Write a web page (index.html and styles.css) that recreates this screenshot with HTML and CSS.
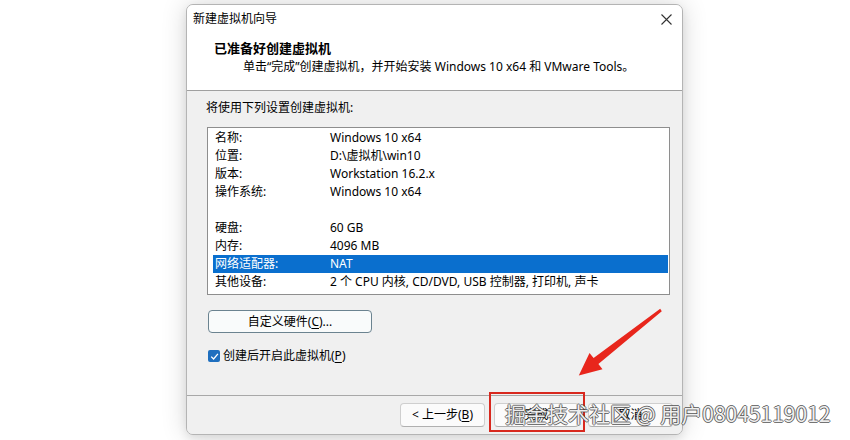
FILE: index.html
```html
<!DOCTYPE html>
<html lang="zh-CN">
<head>
<meta charset="utf-8">
<title>新建虚拟机向导</title>
<link rel="stylesheet" href="styles.css">
</head>
<body>
<div class="stage">
  <div class="dialog">
    <div class="titlebar">
      <span class="title">新建虚拟机向导</span>
      <svg class="close" width="11" height="11" viewBox="0 0 11 11"><path d="M0.5 0.5 L10.5 10.5 M10.5 0.5 L0.5 10.5" stroke="#333" stroke-width="1.1" fill="none"/></svg>
    </div>
    <div class="header">
      <div class="h-title">已准备好创建虚拟机</div>
      <div class="h-sub">单击“完成”创建虚拟机，并开始安装 Windows 10 x64 和 VMware Tools。</div>
    </div>
    <div class="body">
      <div class="intro">将使用下列设置创建虚拟机:</div>
      <div class="listbox">
        <div class="row"><span>名称:</span><span>Windows 10 x64</span></div>
        <div class="row"><span>位置:</span><span>D:\虚拟机\win10</span></div>
        <div class="row"><span>版本:</span><span>Workstation 16.2.x</span></div>
        <div class="row"><span>操作系统:</span><span>Windows 10 x64</span></div>
        <div class="row"></div>
        <div class="row"><span>硬盘:</span><span>60 GB</span></div>
        <div class="row"><span>内存:</span><span>4096 MB</span></div>
        <div class="row selected"><span>网络适配器:</span><span>NAT</span></div>
        <div class="row"><span>其他设备:</span><span>2 个 CPU 内核, CD/DVD, USB 控制器, 打印机, 声卡</span></div>
      </div>
      <button class="btn custom">自定义硬件(<u>C</u>)...</button>
      <label class="check">
        <span class="box"><svg width="9" height="9" viewBox="0 0 9 9"><path d="M1.2 4.6 L3.6 7 L7.9 1.9" stroke="#fff" stroke-width="1.3" fill="none"/></svg></span>
        <span>创建后开启此虚拟机(<u>P</u>)</span>
      </label>
    </div>
    <div class="footer">
      <button class="btn fbtn">&lt; 上一步(<u>B</u>)</button>
      <button class="btn fbtn">完成</button>
      <button class="btn fbtn">取消</button>
    </div>
  </div>
  <svg class="arrow" width="850" height="440" viewBox="0 0 850 440">
    <polygon points="661.8,311.2 598.4,363.9 602.5,369.3 578.8,375.5 589.5,352.9 593.6,358.1 660.2,308.8" fill="#e8261c"/>
  </svg>
  <div class="redbox"></div>
  <div class="watermark">掘金技术社区 @ 用户08045119012</div>
</div>
</body>
</html>
```

FILE: styles.css
```css
html, body {
  margin: 0;
  padding: 0;
}
body {
  width: 850px;
  height: 440px;
  overflow: hidden;
  background: #ffffff;
  font-family: "Noto Sans", "Noto Sans CJK SC", sans-serif;
  font-size: 12px;
  color: #000;
}
.stage {
  position: relative;
  width: 850px;
  height: 440px;
  box-sizing: border-box;
  padding: 4px 0 0 186px;
}
.dialog {
  width: 497px;
  height: 431px;
  box-sizing: border-box;
  border: 1px solid #b4b4b4;
  border-radius: 7px;
  overflow: hidden;
  display: flex;
  flex-direction: column;
  background: #f0f0f0;
  box-shadow: 0 0 26px rgba(0,0,0,0.16), 0 4px 10px rgba(0,0,0,0.08);
}
.titlebar {
  height: 27px;
  flex: none;
  background: #fff;
  display: flex;
  align-items: center;
  justify-content: space-between;
  padding: 0 10px 0 6px;
  line-height: 18px;
}
.title {
  font-size: 12px;
}
.close {
  display: block;
  margin-top: 1px;
}
.header {
  flex: none;
  background: #fff;
  border-bottom: 1px solid #a0a0a0;
  padding: 7px 0 0 27px;
  box-sizing: content-box;
  height: 51px;
}
.h-title {
  font-weight: bold;
  font-size: 13px;
  line-height: 18px;
}
.h-sub {
  line-height: 18px;
  margin-top: 1px;
  padding-left: 29px;
}
.body {
  flex: none;
  height: 304px;
  box-sizing: border-box;
  padding: 8px 0 0 20px;
  background: #f0f0f0;
}
.intro {
  line-height: 18px;
  margin-left: -1px;
}
.listbox {
  margin-top: 10px;
  width: 463px;
  height: 168px;
  box-sizing: border-box;
  border: 1px solid #8e8e8e;
  background: #fff;
  padding: 1px 1px 0 5px;
}
.row {
  height: 18px;
  line-height: 18px;
  display: grid;
  grid-template-columns: 115px 1fr;
  padding-left: 2px;
  white-space: nowrap;
}
.row.selected {
  background: #0a6fce;
  color: #fff;
}
.btn {
  font-family: "Noto Sans", "Noto Sans CJK SC", sans-serif;
  font-size: 12px;
  color: #000;
  background: #fbfbfb;
  border: 1px solid #cfcfcf;
  border-bottom-color: #b0b0b0;
  border-radius: 4px;
  padding: 0;
  line-height: 20px;
  display: block;
}
.btn u {
  text-underline-offset: 2px;
}
.custom {
  margin: 15px 0 0 1px;
  width: 164px;
  height: 23px;
  border: 1px solid #6b8390;
  background: #f9fbfb;
}
.check {
  display: flex;
  align-items: center;
  margin: 14px 0 0 1px;
  line-height: 18px;
  gap: 3px;
}
.check u {
  text-underline-offset: 2px;
}
.box {
  width: 12px;
  height: 12px;
  border-radius: 2px;
  background: #1f6fbf;
  display: flex;
  align-items: center;
  justify-content: center;
}
.box svg {
  display: block;
}
.footer {
  flex: 1;
  border-top: 1px solid #a8a8a8;
  background: #f0f0f0;
  display: flex;
  justify-content: flex-end;
  align-items: flex-start;
  gap: 9px;
  padding: 7px 9px 0 0;
}
.fbtn {
  width: 85px;
  height: 24px;
}
.arrow {
  position: absolute;
  left: 0;
  top: 0;
  pointer-events: none;
}
.redbox {
  position: absolute;
  left: 489px;
  top: 392px;
  width: 96px;
  height: 40px;
  box-sizing: border-box;
  border: 2px solid #d8281e;
}
.watermark {
  position: absolute;
  left: 505px;
  top: 399px;
  font-family: "Noto Sans CJK SC", sans-serif;
  font-size: 21px;
  line-height: 28px;
  white-space: nowrap;
  color: rgba(255,255,255,0.92);
  text-shadow: -1px 0 rgba(70,70,70,0.75), 1px 0 rgba(70,70,70,0.75), 0 -1px rgba(70,70,70,0.75), 0 1px rgba(70,70,70,0.75);
}
```
